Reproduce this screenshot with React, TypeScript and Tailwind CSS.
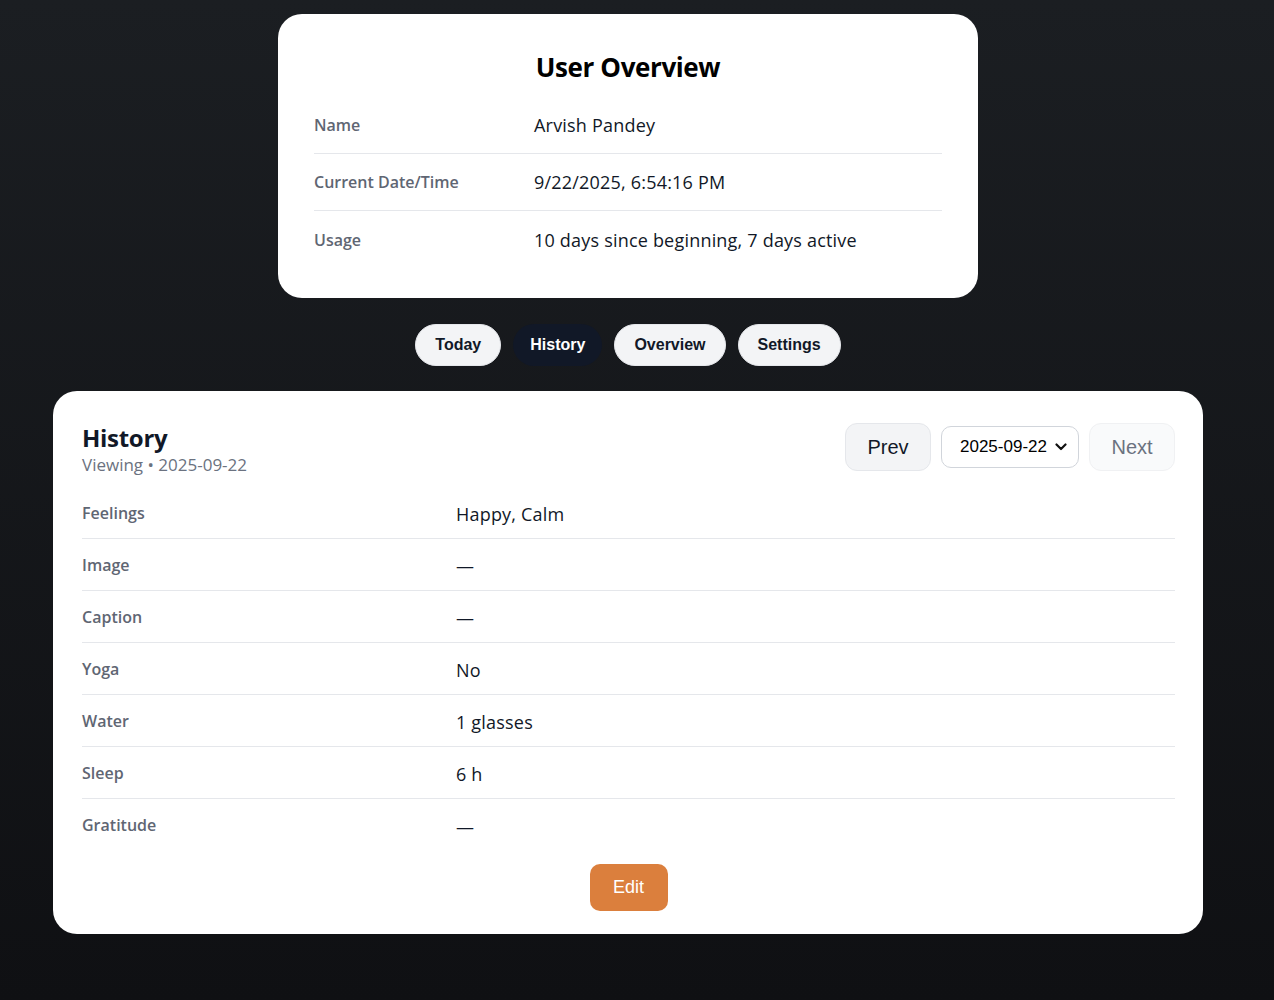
import React from "react";

const ui = { fontFamily: '"Open Sans", "Noto Sans", sans-serif' };
const arial = { fontFamily: '"Liberation Sans", Arial, sans-serif' };

function OverviewRow({ label, value, last }: { label: string; value: string; last?: boolean }) {
  return (
    <div className={`grid grid-cols-[220px_1fr] items-center h-[57px] ${last ? "" : "border-b border-[#e5e7eb]"}`}>
      <div className="text-[16px] leading-6 font-semibold text-[#5f6673]">{label}</div>
      <div className="text-[18px] leading-6 text-[#111827] tracking-[0.2px]">{value}</div>
    </div>
  );
}

function HistRow({ label, value, last }: { label: string; value: string; last?: boolean }) {
  return (
    <div className={`grid grid-cols-[374px_1fr] items-center h-[52px] ${last ? "" : "border-b border-[#e5e7eb]"}`}>
      <div className="text-[16px] leading-6 font-semibold text-[#5f6673]">{label}</div>
      <div className="text-[18px] leading-6 text-[#111827] tracking-[0.2px] pt-[3px]">{value}</div>
    </div>
  );
}

export default function App() {
  const tabs = ["Today", "History", "Overview", "Settings"];
  const rows: [string, string][] = [
    ["Feelings", "Happy, Calm"],
    ["Image", "—"],
    ["Caption", "—"],
    ["Yoga", "No"],
    ["Water", "1 glasses"],
    ["Sleep", "6 h"],
    ["Gratitude", "—"],
  ];
  return (
    <div className="min-h-[1000px] w-full bg-gradient-to-b from-[#1b1e22] to-[#0f1013]" style={ui}>
      <div className="w-[1256px] flex flex-col items-center pt-[14px]">
        <div className="w-[700px] bg-white rounded-[24px] px-9 pt-9 pb-[30px]">
          <h1 className="text-center text-[26px] leading-[34px] font-bold text-black mb-[13px] tracking-[-0.4px]">User Overview</h1>
          <OverviewRow label="Name" value="Arvish Pandey" />
          <OverviewRow label="Current Date/Time" value="9/22/2025, 6:54:16 PM" />
          <OverviewRow label="Usage" value="10 days since beginning, 7 days active" last />
        </div>

        <div className="flex gap-3 mt-[26px]" style={arial}>
          {tabs.map((t) =>
            t === "History" ? (
              <button key={t} className="h-[42px] px-[17px] rounded-full bg-[#111827] text-white text-[16px] font-bold">
                {t}
              </button>
            ) : (
              <button key={t} className="h-[42px] px-[19px] rounded-full bg-[#f3f4f6] border border-[#e5e7eb] text-[#111827] text-[16px] font-bold">
                {t}
              </button>
            )
          )}
        </div>

        <div className="w-[1150px] mt-[25px] bg-white rounded-[24px] pl-[29px] pr-[28px] pt-[32px] pb-[23px]">
          <div className="flex justify-between items-start">
            <div>
              <h2 className="text-[24px] leading-[30px] font-bold text-[#111827] tracking-[-0.3px]">History</h2>
              <div className="text-[17px] leading-6 text-[#6b7280]">Viewing • 2025-09-22</div>
            </div>
            <div className="flex items-center gap-[10px]" style={arial}>
              <button className="w-[86px] h-[48px] rounded-[12px] bg-[#f3f4f6] border border-[#e5e7eb] text-[20px] text-[#111827]">
                Prev
              </button>
              <div className="relative w-[138px] h-[42px] rounded-[10px] border border-[#d1d5db] bg-white flex items-center pl-[18px] text-[17px] text-black">
                2025-09-22
                <svg className="absolute right-[11px] top-[16px]" width="12" height="8" viewBox="0 0 12 8" fill="none">
                  <path d="M1.5 1.5 L6 6 L10.5 1.5" stroke="#111" strokeWidth="2.2" strokeLinecap="round" strokeLinejoin="round" />
                </svg>
              </div>
              <button className="w-[86px] h-[48px] rounded-[12px] bg-[#f9fafb] border border-[#f0f1f3] text-[20px] text-[#6b7280]">
                Next
              </button>
            </div>
          </div>

          <div className="mt-[10px]">
            {rows.map(([l, v], i) => (
              <HistRow key={l} label={l} value={v} last={i === rows.length - 1} />
            ))}
          </div>

          <div className="flex justify-center mt-[13px]">
            <button className="w-[78px] h-[47px] rounded-[10px] bg-[#db7f3d] text-white text-[18px]" style={arial}>
              Edit
            </button>
          </div>
        </div>
      </div>
    </div>
  );
}
